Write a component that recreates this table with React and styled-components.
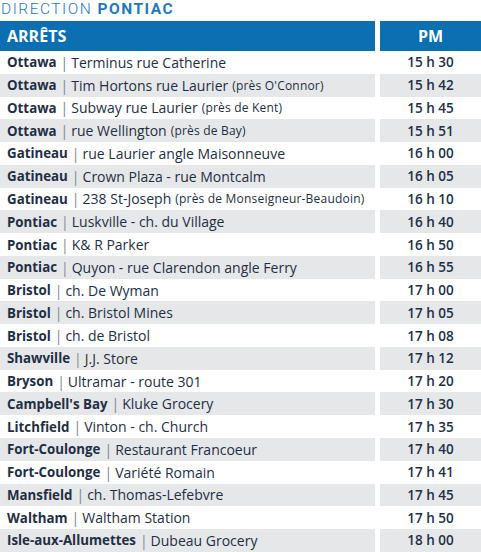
import React from "react";
import styled, { createGlobalStyle } from "styled-components";

const Global = createGlobalStyle`
  html, body { margin: 0; padding: 0; background: #fff; }
  body { font-family: "Open Sans", "Liberation Sans", sans-serif; }
`;

const Page = styled.div`
  width: 481px;
  height: 552px;
  overflow: hidden;
`;

const Title = styled.div`
  height: 21px;
  box-sizing: border-box;
  padding: 0 0 0 1px;
  font-family: Roboto, "Open Sans", sans-serif;
  font-size: 15.5px;
  line-height: 18px;
  color: #1f78bf;
  font-weight: 300;
  letter-spacing: 1.5px;
  white-space: nowrap;
  b { font-weight: 700; }
`;

const Table = styled.div`
  display: grid;
  grid-template-columns: 375px 101px;
  column-gap: 5px;
`;

const Head = styled.div`
  height: 30px;
  background: #0b6fb1;
  color: #fff;
  font-weight: 700;
  font-size: 16px;
  display: flex;
  align-items: center;
  justify-content: ${(p) => (p.$center ? "center" : "flex-start")};
  padding-left: ${(p) => (p.$center ? "0" : "7px")};
`;

const Cell = styled.div`
  height: 22.77px;
  background: ${(p) => (p.$alt ? "#e6e7e8" : "#fff")};
  color: #1e2f45;
  font-size: ${(p) => (p.$center ? "13.5px" : "14px")};
  display: flex;
  align-items: center;
  white-space: nowrap;
  justify-content: ${(p) => (p.$center ? "center" : "flex-start")};
  padding-left: ${(p) => (p.$center ? "0" : "7px")};
  font-weight: ${(p) => (p.$center ? 600 : 400)};
`;

const City = styled.span`
  font-weight: 700;
  font-size: 13.3px;
`;

const Pipe = styled.span`
  color: #7d8792;
  margin: 0 3px 0 4px;
`;

const Note = styled.span`
  font-size: 12px;
  letter-spacing: 0.2px;
  margin-left: 4px;
`;

const rows = [
  ["Ottawa", "Terminus rue Catherine", "", "15 h 30"],
  ["Ottawa", "Tim Hortons rue Laurier", "(près O'Connor)", "15 h 42"],
  ["Ottawa", "Subway rue Laurier", "(près de Kent)", "15 h 45"],
  ["Ottawa", "rue Wellington", "(près de Bay)", "15 h 51"],
  ["Gatineau", "rue Laurier angle Maisonneuve", "", "16 h 00"],
  ["Gatineau", "Crown Plaza - rue Montcalm", "", "16 h 05"],
  ["Gatineau", "238 St-Joseph", "(près de Monseigneur-Beaudoin)", "16 h 10"],
  ["Pontiac", "Luskville - ch. du Village", "", "16 h 40"],
  ["Pontiac", "K& R Parker", "", "16 h 50"],
  ["Pontiac", "Quyon - rue Clarendon angle Ferry", "", "16 h 55"],
  ["Bristol", "ch. De Wyman", "", "17 h 00"],
  ["Bristol", "ch. Bristol Mines", "", "17 h 05"],
  ["Bristol", "ch. de Bristol", "", "17 h 08"],
  ["Shawville", "J.J. Store", "", "17 h 12"],
  ["Bryson", "Ultramar - route 301", "", "17 h 20"],
  ["Campbell's Bay", "Kluke Grocery", "", "17 h 30"],
  ["Litchfield", "Vinton - ch. Church", "", "17 h 35"],
  ["Fort-Coulonge", "Restaurant Francoeur", "", "17 h 40"],
  ["Fort-Coulonge", "Variété Romain", "", "17 h 41"],
  ["Mansfield", "ch. Thomas-Lefebvre", "", "17 h 45"],
  ["Waltham", "Waltham Station", "", "17 h 50"],
  ["Isle-aux-Allumettes", "Dubeau Grocery", "", "18 h 00"],
];

export default function App() {
  return (
    <Page>
      <Global />
      <Title>
        DIRECTION <b>PONTIAC</b>
      </Title>
      <Table>
        <Head>ARRÊTS</Head>
        <Head $center>PM</Head>
        {rows.map(([city, stop, note, time], i) => (
          <React.Fragment key={i}>
            <Cell $alt={i % 2 === 1}>
              <City>{city}</City>
              <Pipe>|</Pipe>
              {stop}
              {note && <Note>{note}</Note>}
            </Cell>
            <Cell $alt={i % 2 === 1} $center>
              {time}
            </Cell>
          </React.Fragment>
        ))}
      </Table>
    </Page>
  );
}
